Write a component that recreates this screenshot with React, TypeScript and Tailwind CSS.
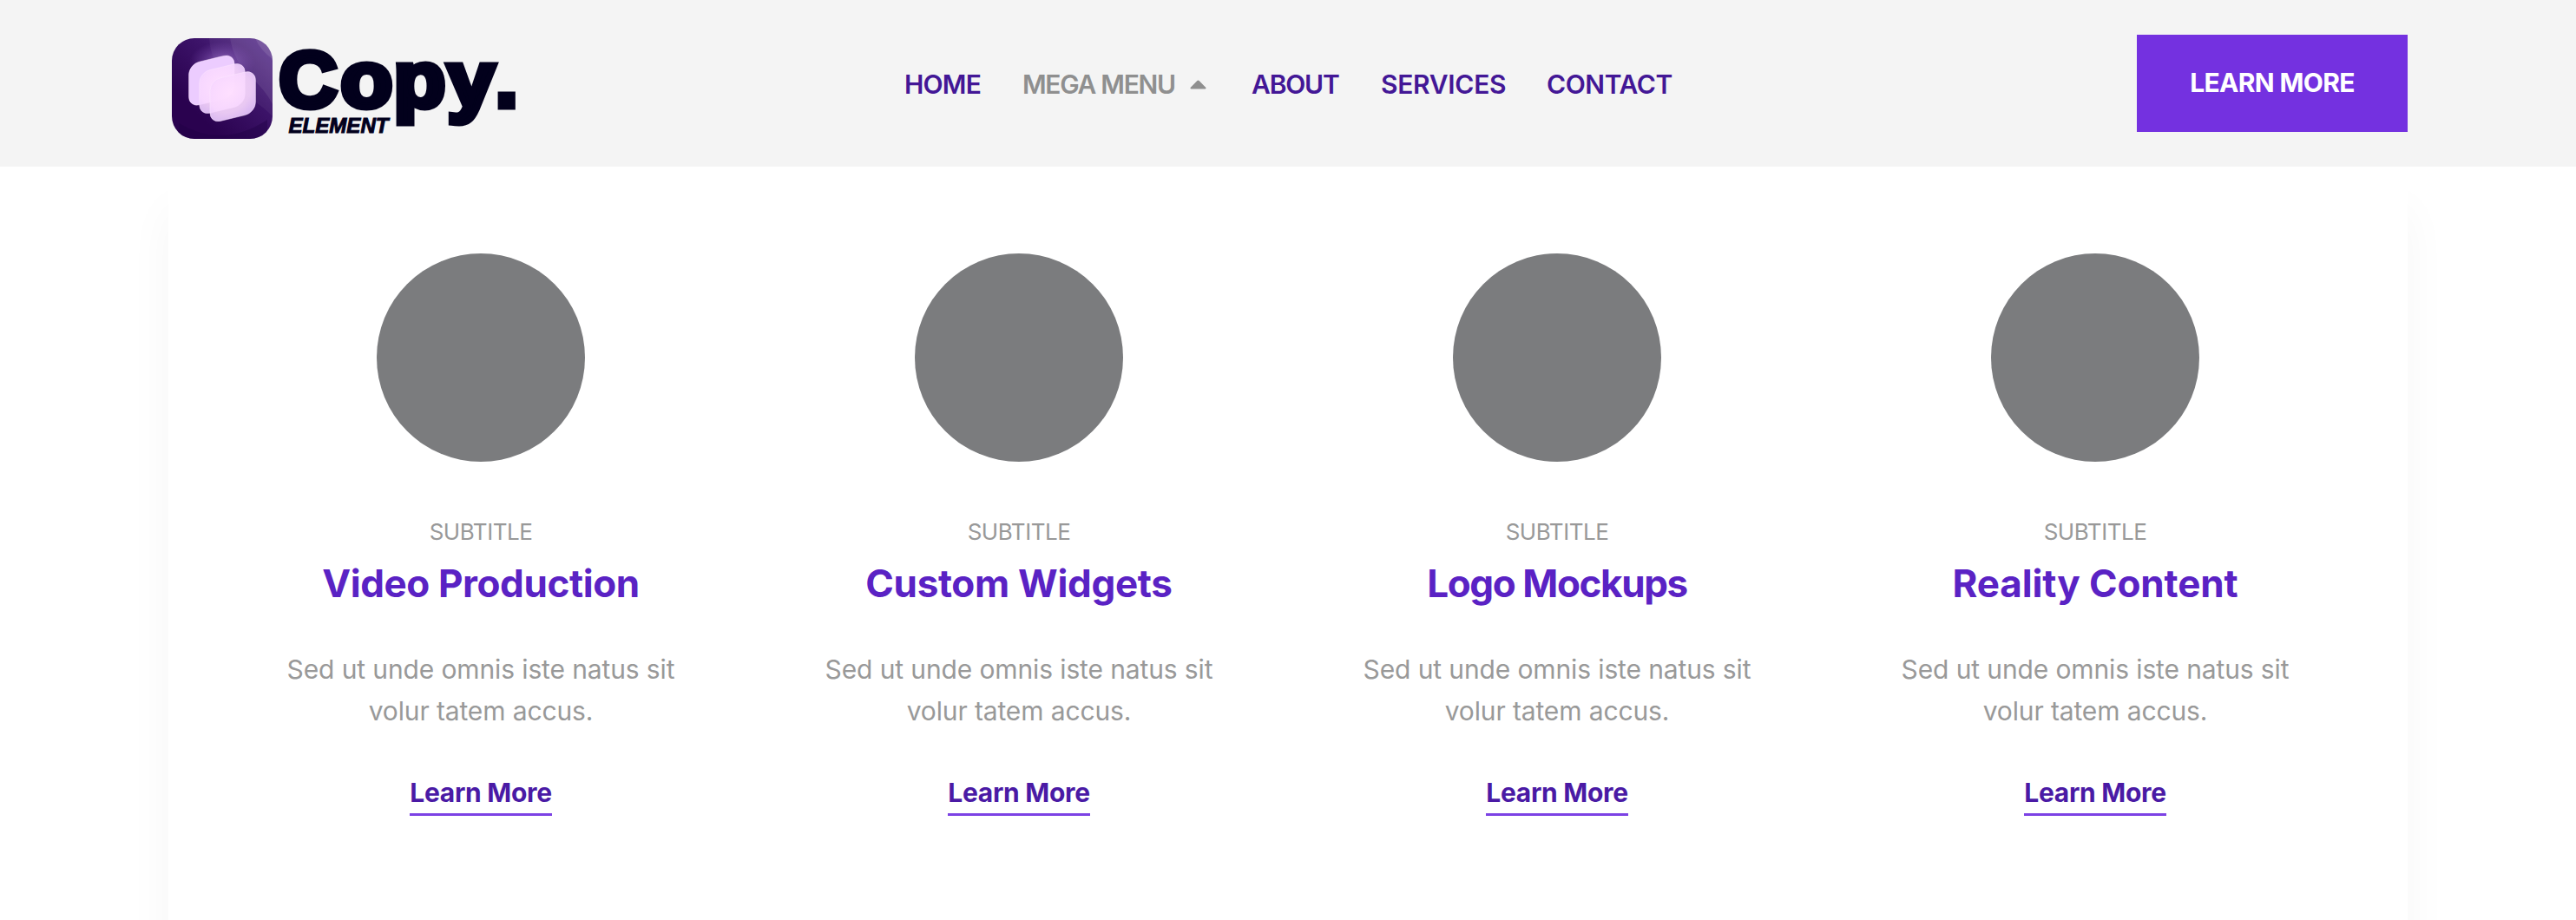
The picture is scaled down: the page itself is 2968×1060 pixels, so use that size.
interface NavItem {
  label: string;
  className: string;
  active?: boolean;
}

interface ServiceItem {
  title: string;
  titleClassName: string;
}

const navItems: NavItem[] = [
  { label: 'HOME', className: 'w-[136px] tracking-[-0.8px]' },
  { label: 'MEGA MENU', className: 'w-[264px] tracking-[-1.3px]', active: true },
  { label: 'ABOUT', className: 'w-[149px] tracking-[-1.2px]' },
  { label: 'SERVICES', className: 'w-[191px] tracking-[-0.3px]' },
  { label: 'CONTACT', className: 'w-[146px] tracking-[-0.4px]' },
];

const services: ServiceItem[] = [
  { title: 'Video Production', titleClassName: 'tracking-[-0.4px]' },
  { title: 'Custom Widgets', titleClassName: 'tracking-[-0.3px]' },
  { title: 'Logo Mockups', titleClassName: 'tracking-[-1.4px]' },
  { title: 'Reality Content', titleClassName: 'tracking-[-0.1px]' },
];

function Logo() {
  return (
    <svg className="mt-3 h-[124px] w-[404px]" viewBox="198 40 404 124" role="img" aria-label="Copy. Element">
      <defs>
        <linearGradient id="tile" x1="1" y1="0" x2="0.25" y2="0.75">
          <stop offset="0" stopColor="#5d3590" />
          <stop offset="0.5" stopColor="#3d146a" />
          <stop offset="1" stopColor="#2a024f" />
        </linearGradient>
        <radialGradient id="glow">
          <stop offset="0" stopColor="#b58be0" stopOpacity="0.65" />
          <stop offset="1" stopColor="#8a5abf" stopOpacity="0" />
        </radialGradient>
        <radialGradient id="card" cx="0.45" cy="0.4" r="0.75">
          <stop offset="0" stopColor="#ffe0ff" />
          <stop offset="0.6" stopColor="#f8d8ff" />
          <stop offset="1" stopColor="#e3c2ff" />
        </radialGradient>
        <clipPath id="tileClip">
          <rect x="198" y="44" width="116" height="116" rx="26" />
        </clipPath>
      </defs>

      <g clipPath="url(#tileClip)">
        <rect x="198" y="44" width="116" height="116" fill="url(#tile)" />
        {/* soft folds in the background */}
        <path d="M241 44q2 38 40 64t33 30V44z" fill="#fff" opacity="0.05" />
        <path d="M265 44q5 28 23 44t26 32V44z" fill="#fff" opacity="0.08" />
        <path d="M294 44q6 14 20 24V44z" fill="#fff" opacity="0.1" />
        <ellipse cx="256" cy="72" rx="38" ry="24" fill="url(#glow)" />
        <path d="M206 142q50 30 102-4v22H206z" fill="#1f0044" opacity="0.4" />
      </g>

      <g stroke="#fdeaff" strokeOpacity="0.6" strokeWidth="0.8">
        <rect x="-26.2" y="-24.8" width="52.4" height="49.6" rx="12" fill="#ecccff" transform="translate(243.8 92.6) skewY(-13.5)" />
        <rect x="-26.2" y="-24.8" width="52.4" height="49.6" rx="12" fill="url(#card)" fillOpacity="0.92" transform="translate(256 102) skewY(-13.5)" />
        <rect x="-26.2" y="-24.8" width="52.4" height="49.6" rx="12" fill="url(#card)" fillOpacity="0.92" transform="translate(268.2 111.2) skewY(-13.5)" />
      </g>

      <g
        fill="#02001c"
        stroke="#02001c"
        strokeWidth="7"
        fontFamily="'Liberation Sans', sans-serif"
        fontWeight="700"
        fontSize="91"
      >
        <text x="321.6" y="122.8" textLength="67" lengthAdjust="spacingAndGlyphs">C</text>
        <text x="392.4" y="122.8" textLength="59.8" lengthAdjust="spacingAndGlyphs">o</text>
        <text x="453.4" y="122.8" textLength="59.8" lengthAdjust="spacingAndGlyphs">p</text>
        <text x="515.5" y="122.8" textLength="54.5" lengthAdjust="spacingAndGlyphs">y</text>
        <text x="568.7" y="123.5" fontSize="108" strokeWidth="5">.</text>
        <text
          x="332.5"
          y="153"
          fontSize="24.5"
          fontStyle="italic"
          strokeWidth="1"
          textLength="115"
          lengthAdjust="spacingAndGlyphs"
        >
          ELEMENT
        </text>
      </g>
    </svg>
  );
}

function Header() {
  return (
    <header className="flex h-48 shrink-0 items-center bg-[#f4f4f4] pr-[194px] pl-[198px] text-[30px] leading-9">
      <div className="w-[844px]">
        <a href="#" className="block">
          <Logo />
        </a>
      </div>

      <nav className="flex pt-0.5 font-semibold whitespace-nowrap text-[#431796]">
        {navItems.map((item) => (
          <a
            key={item.label}
            href="#"
            className={`flex items-center ${item.className} ${item.active ? 'text-[#8f8f8f]' : ''}`}
          >
            {item.label}
            {item.active && (
              <svg className="ml-[17px] h-[11px] w-[19px]" viewBox="0 0 19 11" fill="currentColor">
                <path d="M1.4 10.5h16.2q1.6-.5.6-1.8L10.6 1q-1.1-1-2.2 0L.8 8.7q-1 1.3.6 1.8z" />
              </svg>
            )}
          </a>
        ))}
      </nav>

      <button className="ml-auto h-28 w-[312px] bg-[#7431e0] pb-0.5 font-bold tracking-[-0.65px] text-white">
        LEARN MORE
      </button>
    </header>
  );
}

function ServiceCard({ title, titleClassName }: ServiceItem) {
  return (
    <div className="flex flex-col items-center text-center text-[30px] text-[#999999]">
      <div className="size-60 rounded-full bg-[#7b7c7e]" />
      <p className="mt-[65px] text-[26px] leading-8 tracking-[-0.47px]">SUBTITLE</p>
      <h3 className={`mt-[15px] text-[44px] leading-14 font-bold text-[#5a22c4] ${titleClassName}`}>{title}</h3>
      <p className="mt-[47px] leading-12 tracking-[-0.12px]">
        Sed ut unde omnis iste natus sit
        <br />
        volur tatem accus.
      </p>
      <a
        href="#"
        className="mt-[46px] w-[164px] border-b-3 border-[#7c42e4] leading-12 font-bold tracking-[-0.3px] whitespace-nowrap text-[#4a1aa5]"
      >
        Learn More
      </a>
    </div>
  );
}

export default function App() {
  return (
    <div className="flex h-[1060px] flex-col overflow-hidden bg-white font-['Inter',sans-serif]">
      <Header />
      <main className="mx-[194px] grid h-[1000px] shrink-0 grid-cols-4 bg-white px-[50px] pt-[100px] shadow-[0_50px_50px_rgba(0,0,0,0.04)]">
        {services.map((service) => (
          <ServiceCard key={service.title} {...service} />
        ))}
      </main>
    </div>
  );
}
